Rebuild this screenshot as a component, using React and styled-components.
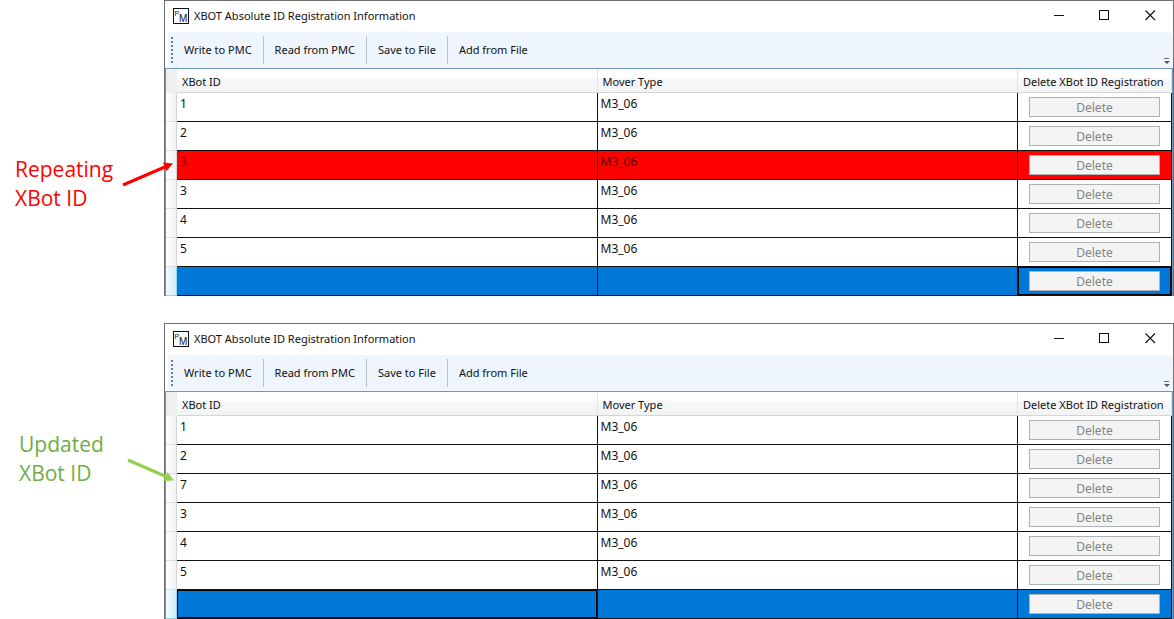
import styled, { createGlobalStyle, css } from "styled-components";

const GlobalStyle = createGlobalStyle`
  * {
    box-sizing: border-box;
  }

  body {
    margin: 0;
    background: #fff;
    color: #111;
    font-family: "Noto Sans", "Open Sans", sans-serif;
    font-size: 11px;
    line-height: 16px;
  }
`

const Page = styled.main`
  display: flex;
  flex-direction: column;
  gap: 27px;
`

const Example = styled.section`
  display: grid;
  grid-template-columns: 164px minmax(0, 1fr);
  position: relative;
`

const Note = styled.p`
  margin: 0;
  padding: ${({ $padding }) => $padding};
  color: ${({ $color }) => $color};
  font-family: "Open Sans", "Noto Sans", sans-serif;
  font-size: 21px;
  line-height: 29px;
`

const Arrow = styled.svg`
  position: absolute;
  left: 120px;
  top: ${({ $top }) => $top}px;
`

const Window = styled.div`
  border: 1px solid #6f6f6f;
  border-bottom: 0;
  background: #fff;
`

const TitleBar = styled.header`
  display: flex;
  align-items: center;
  height: 31px;
  padding: 0 0 2px 8px;
`

const Title = styled.h1`
  flex: 1;
  margin: 0 0 0 5px;
  font-size: 11px;
  font-weight: 400;
  line-height: 16px;
`

const CaptionButton = styled.button`
  display: flex;
  align-items: center;
  justify-content: center;
  width: 46px;
  height: 28px;
  padding: 0;
  border: 0;
  background: none;
`

const ToolBar = styled.div`
  display: flex;
  align-items: center;
  height: 36px;
  margin-left: 3px;
  padding-left: 3px;
  border-radius: 3px;
  background: #eef5fd;
`

const Grip = styled.span`
  width: 2px;
  height: 26px;
  background: repeating-linear-gradient(#76797d 0 2px, transparent 2px 4px);
`

const ToolButton = styled.button`
  height: 28px;
  padding: 0 11px;
  border: 0;
  border-right: ${({ $last }) => ($last ? "0" : "1px solid #b9c1ca")};
  background: none;
  color: #111;
  font: inherit;
`

const OverflowButton = styled.button`
  display: flex;
  align-self: flex-end;
  margin-left: auto;
  padding: 0 3px 4px;
  border: 0;
  background: none;
`

const GridFrame = styled.div`
  border: 1px solid #7197bd;
  border-bottom: 0;
`

const Grid = styled.table`
  width: 100%;
  table-layout: fixed;
  border-collapse: separate;
  border-spacing: 0;
`

const Corner = styled.td`
  width: 11px;
  padding: 0;
  background: #efefef;
`

const ColumnHeader = styled.th`
  width: ${({ $width }) => $width || "auto"};
  height: 24px;
  padding: 2px 0 0 5px;
  border-right: 1px solid #e2e3e5;
  border-bottom: 1px solid #d5d5d5;
  background: linear-gradient(#fff 40%, #f7f8fa 40%, #f2f3f5);
  font-weight: 400;
  text-align: left;
  white-space: nowrap;
`

const RowHeader = styled.td`
  padding: 0;
  border-right: 1px solid #d3d5d8;
  border-bottom: 1px solid #dcdde0;
  background: linear-gradient(90deg, #fff, #f1f2f5);

  ${({ $selected }) => $selected && css`
    border-color: #8fd4f0;
    background: linear-gradient(90deg, #f2fbfe, #d3ecf6);
  `}
`

const Row = styled.tr`
  background: ${({ $state }) =>
    $state === "selected" ? "#0078d7" : $state === "error" ? "#f00" : "#fff"};
  color: ${({ $state }) => ($state === "error" ? "#500" : "#111")};
`

const Cell = styled.td`
  height: 29px;
  padding: 3px;
  border-right: 1px solid #111;
  border-bottom: 1px solid #111;
  font-size: 12px;
  vertical-align: top;
  ${({ $current }) => $current && "box-shadow: inset 1px 1px 0 #000, inset 0 0 0 1px #000;"}
`

const ActionCell = styled(Cell)`
  padding: 4px 11px;
`

const DeleteButton = styled.button`
  display: block;
  width: 100%;
  height: 20px;
  padding: 2px 0 0;
  border: 1px solid #adb2b5;
  background: #f4f4f4;
  color: #838383;
  font: inherit;
`

function Logo() {
  return (
    <svg width="16" height="16" viewBox="0 0 16 16" aria-hidden="true">
      <rect x="0.5" y="0.5" width="15" height="15" fill="#fff" stroke="#111" />
      <text x="1.5" y="7.5" fontFamily="Liberation Sans, sans-serif" fontSize="7" fill="#111">P</text>
      <text x="6" y="13.5" fontFamily="Liberation Sans, sans-serif" fontSize="10" fill="#111">M</text>
    </svg>
  )
}

function RegistrationWindow({ ids, errorIndex, currentCell }) {
  const rows = [...ids, ""]

  return (
    <Window>
      <TitleBar>
        <Logo />
        <Title>XBOT Absolute ID Registration Information</Title>
        <CaptionButton aria-label="Minimize">
          <svg width="11" height="11"><path d="M1 5.5H11" stroke="#111" /></svg>
        </CaptionButton>
        <CaptionButton aria-label="Maximize">
          <svg width="11" height="11"><rect x="0.5" y="0.5" width="9" height="9" fill="none" stroke="#111" /></svg>
        </CaptionButton>
        <CaptionButton aria-label="Close">
          <svg width="11" height="11"><path d="M0.5 0.5L10 10M10 0.5L0.5 10" stroke="#111" strokeWidth="1.1" /></svg>
        </CaptionButton>
      </TitleBar>
      <ToolBar>
        <Grip />
        <ToolButton>Write to PMC</ToolButton>
        <ToolButton>Read from PMC</ToolButton>
        <ToolButton>Save to File</ToolButton>
        <ToolButton $last>Add from File</ToolButton>
        <OverflowButton aria-label="More commands">
          <svg width="6" height="6"><path d="M0 0.5H5" stroke="#666" /><path d="M0 3H6L3 6Z" fill="#555" /></svg>
        </OverflowButton>
      </ToolBar>
      <GridFrame>
        <Grid>
          <thead>
            <tr>
              <Corner />
              <ColumnHeader>XBot ID</ColumnHeader>
              <ColumnHeader>Mover Type</ColumnHeader>
              <ColumnHeader $width="154px">Delete XBot ID Registration</ColumnHeader>
            </tr>
          </thead>
          <tbody>
            {rows.map((id, index) => {
              const selected = index === rows.length - 1
              const state = selected ? "selected" : index === errorIndex ? "error" : "normal"

              return (
                <Row key={index} $state={state}>
                  <RowHeader $selected={selected} />
                  <Cell $current={selected && currentCell === "id"}>{id}</Cell>
                  <Cell>{id && "M3_06"}</Cell>
                  <ActionCell $current={selected && currentCell === "delete"}>
                    <DeleteButton disabled>Delete</DeleteButton>
                  </ActionCell>
                </Row>
              )
            })}
          </tbody>
        </Grid>
      </GridFrame>
    </Window>
  )
}

export default function App() {
  return (
    <>
      <GlobalStyle />
      <Page>
        <Example>
          <Note $color="#ff0000" $padding="155px 0 0 15px">
            Repeating<br />XBot ID
          </Note>
          <RegistrationWindow ids={["1", "2", "3", "3", "4", "5"]} errorIndex={2} currentCell="delete" />
          <Arrow $top={160} width="56" height="28" viewBox="0 0 56 28" aria-hidden="true">
            <path d="M3 25L46 6.5" stroke="#f00" strokeWidth="3" />
            <path d="M43 2.5L53 3.5L46.5 11Z" fill="#f00" />
          </Arrow>
        </Example>
        <Example>
          <Note $color="#70ad47" $padding="107px 0 0 19px">
            Updated<br />XBot ID
          </Note>
          <RegistrationWindow ids={["1", "2", "7", "3", "4", "5"]} currentCell="id" />
          <Arrow $top={134} width="56" height="28" viewBox="0 0 56 28" aria-hidden="true">
            <path d="M8 3L47 20" stroke="#92d050" strokeWidth="3" />
            <path d="M47.5 15L54 23.5L43.5 24Z" fill="#92d050" />
          </Arrow>
        </Example>
      </Page>
    </>
  )
}
